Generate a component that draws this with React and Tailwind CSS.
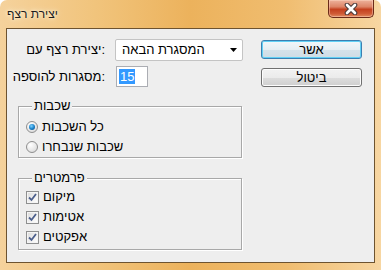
import React from "react";

function CloseButton() {
  return (
    <div className="ml-auto mr-[7px] w-[46px] h-[18px] rounded-b-[5px] border border-t-0 border-[#6b2a18] bg-[linear-gradient(180deg,#eeb29c_0%,#dd8467_40%,#c4401f_55%,#cf5a35_80%,#e08a60_100%)] shadow-[inset_0_0_0_1px_rgba(255,220,200,0.45)] flex items-center justify-center">
      <svg width="14" height="12" viewBox="0 0 14 12">
        <path d="M3 2 L11 10 M11 2 L3 10" stroke="#4a3a3a" strokeWidth="4.6" strokeLinecap="round" fill="none" />
        <path d="M3 2 L11 10 M11 2 L3 10" stroke="#ffffff" strokeWidth="2.6" strokeLinecap="round" fill="none" />
      </svg>
    </div>
  );
}

function Button({ children, isDefault }) {
  return (
    <div
      className={
        "w-[101px] h-[19px] rounded-[3px] flex items-center justify-center leading-none " +
        (isDefault
          ? "border border-[#3c7fb1] bg-[linear-gradient(180deg,#f2f7fa_0%,#e6eef3_50%,#d6e2ea_51%,#cfdce5_100%)] shadow-[inset_0_0_0_1px_#62d0f5]"
          : "border border-[#707070] bg-[linear-gradient(180deg,#f2f2f2_0%,#ebebeb_50%,#dddddd_51%,#cfcfcf_100%)] shadow-[inset_0_0_0_1px_#fcfcfc]")
      }
    >
      {children}
    </div>
  );
}

function Radio({ checked }) {
  return (
    <div className="w-[12px] h-[12px] rounded-full border border-[#8f8f8f] bg-[radial-gradient(circle_at_35%_30%,#ffffff_0%,#e6e6e6_60%,#cfcfcf_100%)] flex items-center justify-center shrink-0">
      {checked && (
        <div className="w-[6px] h-[6px] rounded-full bg-[radial-gradient(circle_at_40%_35%,#7fd3ff_0%,#1b84cc_50%,#0a3f78_100%)]" />
      )}
    </div>
  );
}

function Check() {
  return (
    <div className="w-[13px] h-[13px] border border-[#8e8f8f] bg-[linear-gradient(135deg,#dadada_0%,#f2f2f2_60%,#ffffff_100%)] shadow-[inset_0_0_0_1px_#f4f4f4] flex items-center justify-center shrink-0">
      <svg width="9" height="9" viewBox="0 0 9 9">
        <path d="M1 4.5 L3.5 7 L8 1" stroke="#4c5f8c" strokeWidth="1.8" fill="none" />
      </svg>
    </div>
  );
}

function Group({ title, children, className }) {
  return (
    <div className={"relative border border-[#a8a8a8] shadow-[1px_1px_0_#ffffff,inset_1px_1px_0_#ffffff] " + className}>
      <span className="absolute left-[13px] top-[-9px] px-[2px] bg-[#eeeeee] leading-[15px] whitespace-nowrap">{title}</span>
      {children}
    </div>
  );
}

export default function App() {
  return (
    <div className="w-[381px] h-[270px] overflow-hidden font-['Liberation_Sans',sans-serif] text-[13px] text-black">
      <div className="w-full h-full flex flex-col rounded-t-[7px] bg-[linear-gradient(90deg,#f5d29c_0%,#f1c47c_25%,#ecb25c_50%,#f0bd70_75%,#f7d6a2_100%)]">
        <div className="h-[28px] flex items-start">
          <span className="mt-[7px] ml-[7px] text-[12px] leading-[14px] text-[#1c1c1c] [text-shadow:0_0_6px_#fff6e0,0_0_3px_#fff6e0]">
            יצירת רצף
          </span>
          <CloseButton />
        </div>
        <div className="mx-[6px] h-[235px] border border-[#6d5330] bg-[#eeeeee] flex">
          <div className="w-[244px] flex flex-col">
            <div className="mt-[10px] flex items-center">
              <div className="w-[98px] flex justify-end whitespace-nowrap leading-[16px]">יצירת רצף עם:</div>
              <div className="ml-[10px] w-[128px] h-[22px] border border-[#c4c4c4] bg-white rounded-[2px] flex items-center pl-[6px] pr-[5px]">
                <span className="leading-[16px] whitespace-nowrap">המסגרת הבאה</span>
                <svg className="ml-auto" width="7" height="4" viewBox="0 0 7 4">
                  <path d="M0 0 H7 L3.5 4 Z" fill="#000" />
                </svg>
              </div>
            </div>
            <div className="mt-[5px] flex items-center">
              <div className="w-[98px] flex justify-end whitespace-nowrap leading-[16px]">מסגרות להוספה:</div>
              <div className="ml-[11px] w-[32px] h-[21px] border border-[#abadb3] bg-white flex items-center pl-[2px]">
                <span className="bg-[#3399ff] text-white leading-[15px] px-[1px]">15</span>
              </div>
            </div>
            <Group title="שכבות" className="mt-[19px] ml-[11px] w-[224px] h-[52px] pt-[10px] pl-[7px]">
              <div className="h-[20px] flex items-center gap-[4px]">
                <Radio checked />
                <span className="leading-[16px]">כל השכבות</span>
              </div>
              <div className="h-[20px] flex items-center gap-[4px]">
                <Radio />
                <span className="leading-[16px]">שכבות שנבחרו</span>
              </div>
            </Group>
            <Group title="פרמטרים" className="mt-[20px] ml-[11px] w-[224px] h-[72px] pt-[8px] pl-[7px]">
              <div className="h-[20px] flex items-center gap-[4px]">
                <Check />
                <span className="leading-[16px]">מיקום</span>
              </div>
              <div className="h-[20px] flex items-center gap-[4px]">
                <Check />
                <span className="leading-[16px]">אטימות</span>
              </div>
              <div className="h-[20px] flex items-center gap-[4px]">
                <Check />
                <span className="leading-[16px]">אפקטים</span>
              </div>
            </Group>
          </div>
          <div className="ml-[10px] flex flex-col pt-[11px] gap-[9px]">
            <Button isDefault>אשר</Button>
            <Button>ביטול</Button>
          </div>
        </div>
      </div>
    </div>
  );
}
